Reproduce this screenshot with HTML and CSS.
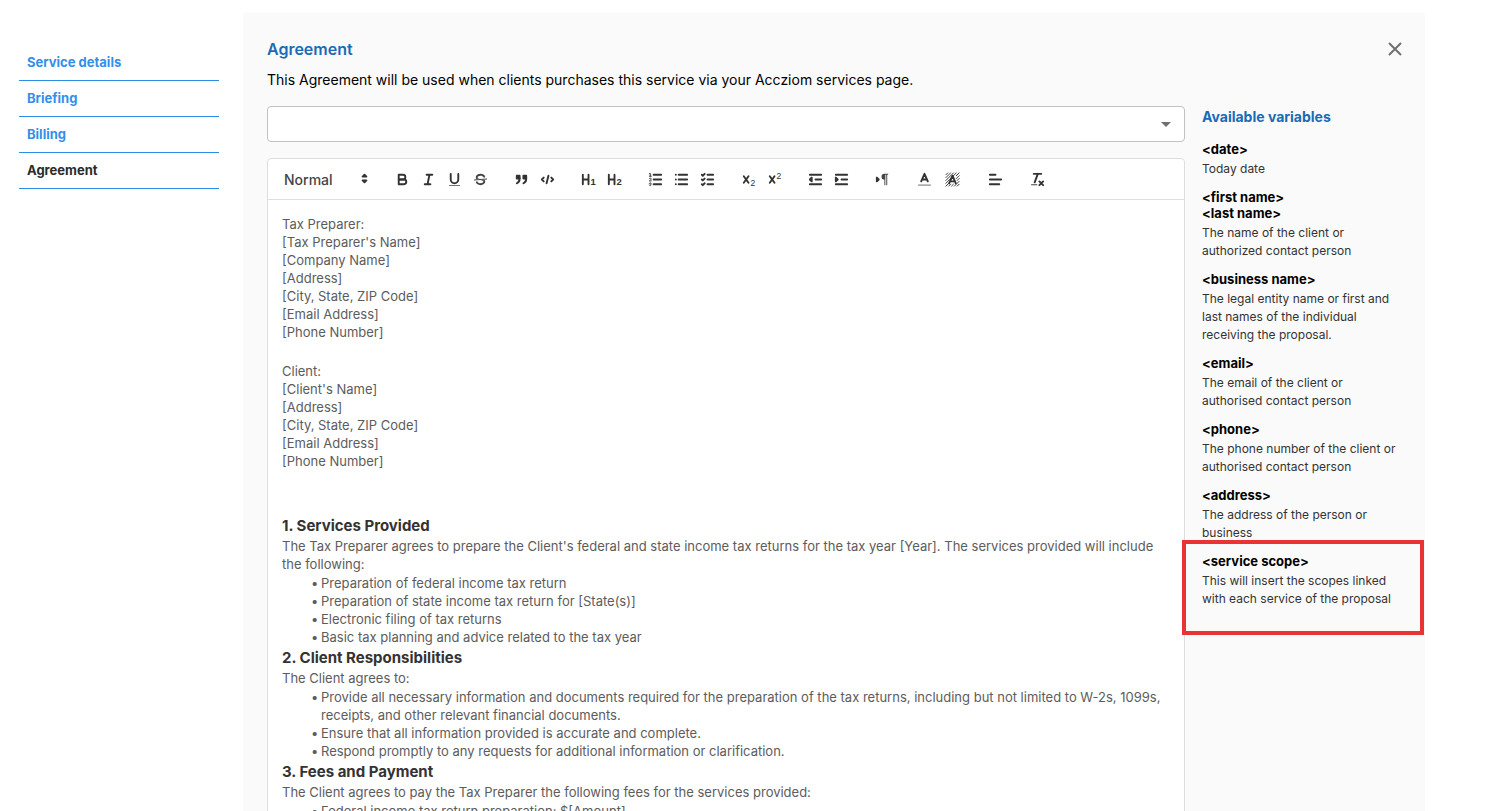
FILE: index.html
```html
<!DOCTYPE html>
<html lang="en">
<head>
  <meta charset="UTF-8" />
  <meta name="viewport" content="width=device-width, initial-scale=1.0" />
  <title>Agreement</title>
  <link rel="stylesheet" href="styles.css">
</head>
<body>
  <div class="app">
    <nav class="steps">
      <a href="#details">Service details</a>
      <a href="#briefing">Briefing</a>
      <a href="#billing">Billing</a>
      <a href="#agreement" class="active">Agreement</a>
    </nav>

    <main class="panel">
      <div class="panel-head">
        <h1>Agreement</h1>
        <button class="close" aria-label="Close">
          <svg viewBox="0 0 14 14"><path d="M1 1L13 13M13 1L1 13"/></svg>
        </button>
      </div>
      <p class="intro">This Agreement will be used when clients purchases this service via your Accziom services page.</p>

      <div class="columns">
        <div class="main-col">
          <div class="template">
            <select aria-label="Agreement template"><option></option></select>
            <svg class="caret" viewBox="0 0 10 5"><path d="M0 0H10L5 5Z"/></svg>
          </div>

          <div class="editor">
            <div class="toolbar">
              <div class="group format">
                <select aria-label="Text format"><option>Normal</option></select>
                <svg class="icon" viewBox="0 0 18 18"><polygon class="both" points="7 11 9 13 11 11 7 11"/><polygon class="both" points="7 7 9 5 11 7 7 7"/></svg>
              </div>
              <div class="group">
                <button aria-label="Bold"><svg class="icon" viewBox="0 0 18 18"><path d="M5,4H9.5A2.5,2.5,0,0,1,9.5,9H5Z"/><path d="M5,9h5.5A2.5,2.5,0,0,1,10.5,14H5Z"/></svg></button>
                <button aria-label="Italic"><svg class="icon" viewBox="0 0 18 18"><path d="M7,4H13M5,14H11M8,14L10,4"/></svg></button>
                <button aria-label="Underline"><svg class="icon" viewBox="0 0 18 18"><path d="M5,3V9a4,4,0,0,0,8,0V3"/><rect class="fill" height="1" rx="0.5" width="12" x="3" y="15"/></svg></button>
                <button aria-label="Strike"><svg class="icon" viewBox="0 0 18 18"><path class="thin" d="M15.5,8.5L2.5,9.5"/><path class="fill" d="M9.007,8C6.542,7.791,6,7.519,6,6.5,6,5.792,7.283,5,9,5c1.571,0,2.765.679,2.969,1.309a1,1,0,0,0,1.9-.617C13.356,4.106,11.354,3,9,3,6.2,3,4,4.538,4,6.5a3.2,3.2,0,0,0,.5,1.843Z"/><path class="fill" d="M8.984,10C11.457,10.208,12,10.479,12,11.5c0,.708-1.283,1.5-3,1.5-1.571,0-2.765-.679-2.969-1.309a1,1,0,1,0-1.9.617C4.644,13.894,6.646,15,9,15c2.8,0,5-1.538,5-3.5a3.2,3.2,0,0,0-.5-1.843Z"/></svg></button>
              </div>
              <div class="group">
                <button aria-label="Quote"><svg class="icon" viewBox="0 0 18 18"><rect class="both" height="3" width="3" x="4" y="5"/><rect class="both" height="3" width="3" x="11" y="5"/><path class="both" d="M7,8c0,4.031-3,5-3,5"/><path class="both" d="M14,8c0,4.031-3,5-3,5"/></svg></button>
                <button aria-label="Code"><svg class="icon" viewBox="0 0 18 18"><path d="M5,7L3,9L5,11M13,7L15,9L13,11M10,5L8,13"/></svg></button>
              </div>
              <div class="group">
                <button aria-label="Heading 1"><svg class="icon" viewBox="0 0 18 18"><path d="M3,4V14M9,4V14M3,9H9"/><text x="11" y="15">1</text></svg></button>
                <button aria-label="Heading 2"><svg class="icon" viewBox="0 0 18 18"><path d="M3,4V14M9,4V14M3,9H9"/><text x="11" y="15">2</text></svg></button>
              </div>
              <div class="group">
                <button aria-label="Ordered list"><svg class="icon" viewBox="0 0 18 18"><path d="M7,4H15M7,9H15M7,14H15"/><path class="thin" d="M2.5,5.5H4.5M2.5,3L3.5,2.5V5.5M4.5,10.5h-2c0-.234,1.85-1.076,1.85-2.234A.959.959,0,0,0,2.5,8.156M2.5,14.846a.959.959,0,0,0,1.85-.109A.7.7,0,0,0,3.75,14a.688.688,0,0,0,.6-.736.959.959,0,0,0-1.85-.109"/></svg></button>
                <button aria-label="Bullet list"><svg class="icon" viewBox="0 0 18 18"><path d="M6,4H15M6,9H15M6,14H15M3,4H3M3,9H3M3,14H3"/></svg></button>
                <button aria-label="Check list"><svg class="icon" viewBox="0 0 18 18"><path d="M9,4H15M9,9H15M9,14H15M3,4L4,5L6,3M3,9L4,10L6,8M3,14L4,15L6,13"/></svg></button>
              </div>
              <div class="group">
                <button aria-label="Subscript"><svg class="icon" viewBox="0 0 18 18"><path d="M4,5.5L9,12.5M9,5.5L4,12.5"/><text class="light" x="11" y="16">2</text></svg></button>
                <button aria-label="Superscript"><svg class="icon" viewBox="0 0 18 18"><path d="M4,5.5L9,12.5M9,5.5L4,12.5"/><text class="light" x="11" y="8">2</text></svg></button>
              </div>
              <div class="group">
                <button aria-label="Outdent"><svg class="icon" viewBox="0 0 18 18"><path d="M3,14H15M3,4H15M9,9H15"/><path class="both" d="M5,7V11L3,9Z"/></svg></button>
                <button aria-label="Indent"><svg class="icon" viewBox="0 0 18 18"><path d="M3,14H15M3,4H15M9,9H15"/><path class="both" d="M3,7V11L5,9Z"/></svg></button>
              </div>
              <div class="group">
                <button aria-label="Text direction"><svg class="icon" viewBox="0 0 18 18"><path class="both" d="M3,11L5,9L3,7Z"/><path class="fill" d="M11,3a3,3,0,0,0,0,6V15H12V4H13V15H14V4H15V3Z"/></svg></button>
              </div>
              <div class="group pickers">
                <button aria-label="Text color"><svg class="icon" viewBox="0 0 18 18"><path class="faded" d="M3,15H15"/><path d="M5.5,11L9,3L12.5,11M11.63,9H6.38"/></svg></button>
                <button aria-label="Background color"><svg class="icon" viewBox="0 0 18 18"><path class="thin" d="M2,4L4,2M2,7L7,2M2,10L10,2M2,13L13,2M2,16L5,13M13,5L16,2M5,16L7,14M13,8L16,5M8,16L10,14M14,10L16,8M11,16L16,11M14,16L16,14"/><path d="M5.5,13L9,5L12.5,13M11.63,11H6.38"/></svg></button>
              </div>
              <div class="group pickers">
                <button aria-label="Align"><svg class="icon" viewBox="0 0 18 18"><path d="M3,4H9M3,9H15M3,14H13"/></svg></button>
              </div>
              <div class="group">
                <button aria-label="Clear format"><svg class="icon" viewBox="0 0 18 18"><path d="M5,3H13M6,12L9.35,3M11,11L15,15M15,11L11,15"/><rect class="fill" height="1" rx="0.5" width="7" x="2" y="14"/></svg></button>
              </div>
            </div>

            <div class="document">
              <div class="address">
                <p>Tax Preparer:</p>
                <p>[Tax Preparer's Name]</p>
                <p>[Company Name]</p>
                <p>[Address]</p>
                <p>[City, State, ZIP Code]</p>
                <p>[Email Address]</p>
                <p>[Phone Number]</p>
              </div>
              <div class="address client">
                <p>Client:</p>
                <p>[Client's Name]</p>
                <p>[Address]</p>
                <p>[City, State, ZIP Code]</p>
                <p>[Email Address]</p>
                <p>[Phone Number]</p>
              </div>

              <h3>1. Services Provided</h3>
              <p>The Tax Preparer agrees to prepare the Client's federal and state income tax returns for the tax year [Year]. The services provided will include the following:</p>
              <ul>
                <li>Preparation of federal income tax return</li>
                <li>Preparation of state income tax return for [State(s)]</li>
                <li>Electronic filing of tax returns</li>
                <li>Basic tax planning and advice related to the tax year</li>
              </ul>
              <h3>2. Client Responsibilities</h3>
              <p>The Client agrees to:</p>
              <ul>
                <li>Provide all necessary information and documents required for the preparation of the tax returns, including but not limited to W-2s, 1099s, receipts, and other relevant financial documents.</li>
                <li>Ensure that all information provided is accurate and complete.</li>
                <li>Respond promptly to any requests for additional information or clarification.</li>
              </ul>
              <h3>3. Fees and Payment</h3>
              <p>The Client agrees to pay the Tax Preparer the following fees for the services provided:</p>
              <ul>
                <li>Federal income tax return preparation: $[Amount]</li>
              </ul>
            </div>
          </div>
        </div>

        <aside class="variables">
          <h2>Available variables</h2>
          <dl>
            <div class="variable">
              <dt>&lt;date&gt;</dt>
              <dd>Today date</dd>
            </div>
            <div class="variable">
              <dt>&lt;first name&gt;</dt>
              <dt>&lt;last name&gt;</dt>
              <dd>The name of the client or authorized contact person</dd>
            </div>
            <div class="variable">
              <dt>&lt;business name&gt;</dt>
              <dd>The legal entity name or first and last names of the individual receiving the proposal.</dd>
            </div>
            <div class="variable">
              <dt>&lt;email&gt;</dt>
              <dd>The email of the client or authorised contact person</dd>
            </div>
            <div class="variable">
              <dt>&lt;phone&gt;</dt>
              <dd>The phone number of the client or authorised contact person</dd>
            </div>
            <div class="variable">
              <dt>&lt;address&gt;</dt>
              <dd>The address of the person or business</dd>
            </div>
            <div class="variable highlight">
              <dt>&lt;service scope&gt;</dt>
              <dd>This will insert the scopes linked with each service of the proposal</dd>
            </div>
          </dl>
        </aside>
      </div>
    </main>
  </div>
</body>
</html>
```
FILE: styles.css
```css
* {
  box-sizing: border-box;
}

body {
  margin: 0;
  background: #fff;
  color: #000;
  font-family: Inter, "Liberation Sans", sans-serif;
  font-size: 13px;
}

h1, h2, h3, p, ul, dl, dd {
  margin: 0;
  padding: 0;
}

button {
  padding: 0;
  border: none;
  background: none;
  cursor: pointer;
}

.app {
  display: flex;
  gap: 24px;
  height: 100vh;
  padding: 13px 82px 0 19px;
  overflow: hidden;
}

/* left menu */
.steps {
  flex: 0 0 200px;
  padding-top: 32px;
}

.steps a {
  display: block;
  padding: 10px 8px;
  border-bottom: 1px solid #2b90e3;
  color: #338fe9;
  font-weight: 700;
  line-height: 15px;
  text-decoration: none;
}

.steps a.active {
  color: #2b2b2b;
}

.panel {
  flex: 1;
  min-width: 0;
  padding: 24px 23px 0 24px;
  background: #fafafa;
}

.panel-head {
  display: flex;
  justify-content: space-between;
  align-items: center;
  height: 24px;
}

h1 {
  color: #1a6bb5;
  font-size: 16px;
  font-weight: 600;
}

.close {
  width: 14px;
  height: 14px;
}

.close svg {
  display: block;
  stroke: #707070;
  stroke-width: 2;
}

.intro {
  margin: 8px 0 15px;
  font-size: 14px;
  line-height: 22px;
}

.columns {
  display: grid;
  grid-template-columns: minmax(0, 1fr) 200px;
  gap: 17px;
}

/* template drop-down */
.template {
  position: relative;
  margin-bottom: 16px;
}

.template select {
  display: block;
  width: 100%;
  height: 36px;
  border: 1px solid #c1c1c1;
  border-radius: 4px;
  background: #fff;
  appearance: none;
}

.caret {
  position: absolute;
  right: 14px;
  top: 16px;
  width: 10px;
  height: 5px;
  fill: #707070;
  pointer-events: none;
}

/* editor */
.editor {
  border: 1px solid #dedede;
  border-radius: 4px;
  background: #fff;
}

.toolbar {
  display: flex;
  flex-wrap: wrap;
  gap: 15px;
  padding: 9px 8px;
  border-bottom: 1px solid #dedede;
}

.group {
  display: flex;
}

.group button {
  display: flex;
  align-items: center;
  justify-content: center;
  width: 26px;
  height: 22px;
}

.pickers button {
  width: 28px;
}

.format {
  position: relative;
  width: 98px;
}

.format select {
  width: 100%;
  height: 22px;
  padding: 0 8px;
  border: none;
  background: none;
  color: #444;
  font-family: inherit;
  font-size: 14px;
  font-weight: 500;
  appearance: none;
}

.format .icon {
  position: absolute;
  right: 1px;
  top: 2px;
  pointer-events: none;
}

.icon {
  width: 17px;
  height: 17px;
  fill: none;
  stroke: #333;
  stroke-width: 2;
  stroke-linecap: round;
  stroke-linejoin: round;
}

.icon .fill {
  fill: #444;
  stroke: none;
}

.icon .both {
  fill: #333;
}

.icon .thin {
  stroke-width: 1;
}

.icon .faded {
  opacity: 0.4;
}

.icon text {
  fill: #333;
  stroke: none;
  font-size: 10px;
  font-weight: 700;
}

.icon .light {
  font-size: 9px;
  font-weight: 500;
}

.document {
  padding: 15px 14px 0;
  color: #5c5c5c;
  line-height: 18px;
}

.address {
  margin-bottom: 21px;
}

.client {
  margin-bottom: 45px;
}

.document h3 {
  color: #333;
  font-size: 15px;
  font-weight: 700;
  line-height: 22px;
}

.document ul {
  padding: 1px 0 1px 39px;
  list-style: none;
}

.document li::before {
  content: "•";
  display: inline-block;
  width: 10px;
  margin-left: -10px;
}

/* variables list */
.variables h2 {
  margin-bottom: 13px;
  color: #1a6bb5;
  font-size: 14px;
  font-weight: 700;
  line-height: 22px;
}

.variable {
  position: relative;
  margin-bottom: 11px;
}

.variable dt {
  font-weight: 700;
  line-height: 16px;
}

.variable dd {
  padding-top: 3px;
  color: #333;
  font-size: 12px;
  line-height: 18px;
}

.highlight::after {
  content: "";
  position: absolute;
  inset: -13px -22px -27px -20px;
  border: 4px solid #e93434;
}
```
